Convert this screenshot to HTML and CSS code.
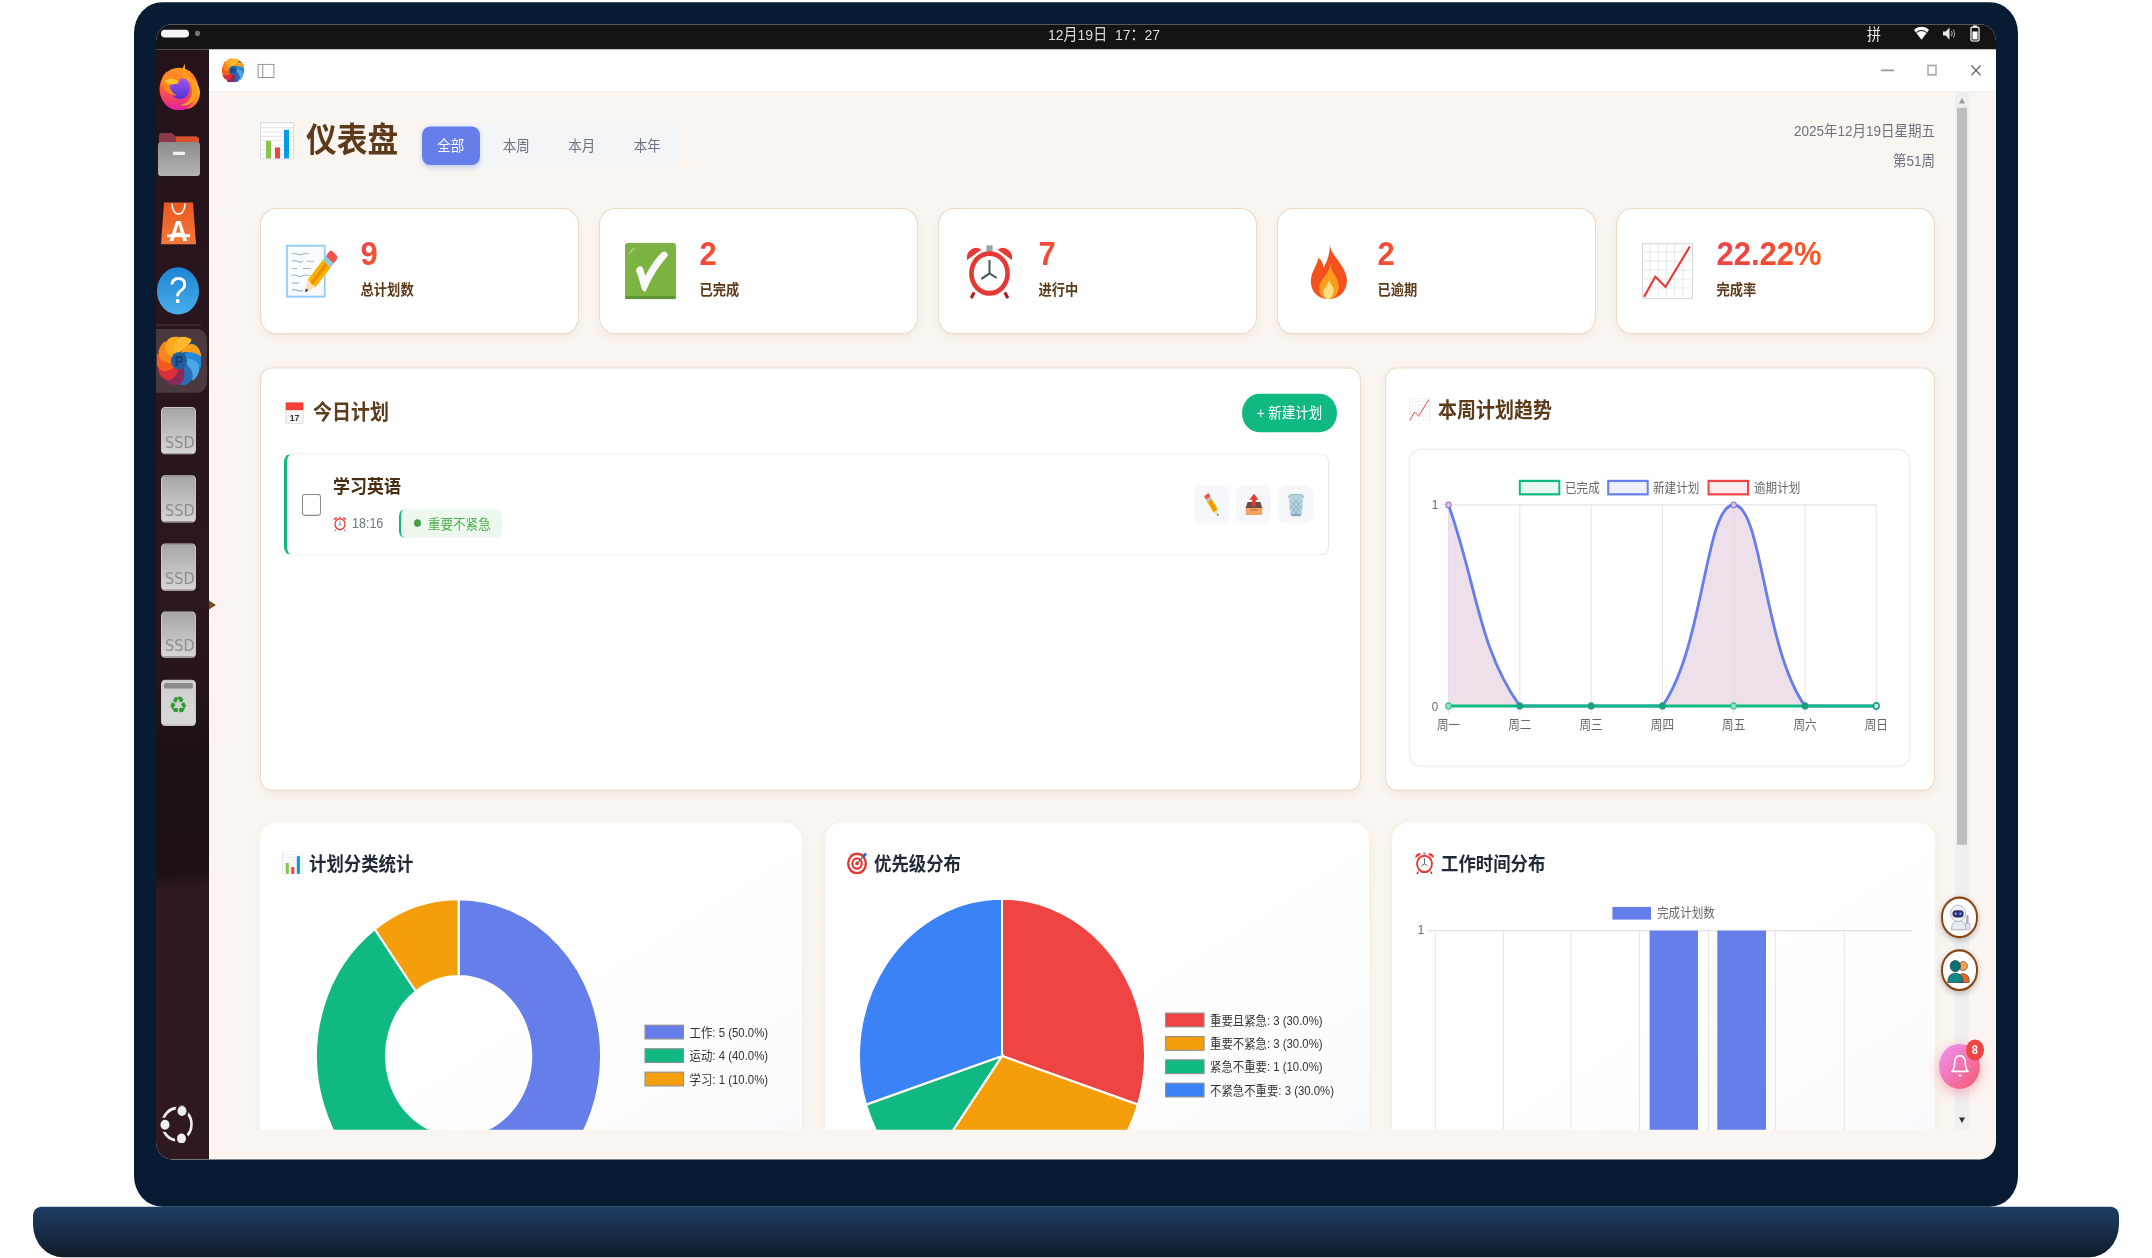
FILE: index.html
```html
<!DOCTYPE html>
<html lang="zh-CN">
<head>
<meta charset="utf-8">
<title>仪表盘</title>
<link rel="stylesheet" href="styles.css">
</head>
<body>
<svg class="sprite" aria-hidden="true">
  <defs>
    <linearGradient id="g-fox" x1="0" y1="0" x2="0" y2="1"><stop offset="0" stop-color="#ff9a24"/><stop offset=".5" stop-color="#ff5a3a"/><stop offset="1" stop-color="#e01fa0"/></linearGradient>
    <linearGradient id="g-flame" x1="0" y1="0" x2="0" y2="1"><stop offset="0" stop-color="#ffe14a"/><stop offset=".6" stop-color="#ffb01f"/><stop offset="1" stop-color="#ff6a2a"/></linearGradient>
    <linearGradient id="g-globe" x1="0" y1="0" x2="0" y2="1"><stop offset="0" stop-color="#a45ae6"/><stop offset="1" stop-color="#5330d8"/></linearGradient>
    <linearGradient id="g-folder" x1="0" y1="0" x2="0" y2="1"><stop offset="0" stop-color="#8c8c8c"/><stop offset="1" stop-color="#b4b4b4"/></linearGradient>
    <linearGradient id="g-bag" x1="0" y1="0" x2="0" y2="1"><stop offset="0" stop-color="#e9571f"/><stop offset="1" stop-color="#f47a3a"/></linearGradient>
    <path id="blade" d="M0 -7C5 -21 16 -21 21.500 -8C16 -5 7 -5 0 -7Z"/>
  </defs>
  <symbol id="i-firefox" viewBox="0 0 42 42">
    <circle cx="21" cy="23" r="19.500" fill="url(#g-fox)"/>
    <path d="M27 0c-1 6 1 9 5 12 6 4 10 9 10 14 0 8-6 15-14 15 6-3 9-8 9-14 0-6-4-10-9-14-4-3-3-8-1-13z" fill="url(#g-flame)"/>
    <path d="M27 0c-3 4-4 8-3 12 5 1 9 5 10 10 1 8-4 14-12 16 9 1 16-4 17-12 1-6-3-10-7-14-3-3-6-6-5-12z" fill="#ff9d1f"/>
    <circle cx="22" cy="22" r="10" fill="url(#g-globe)"/>
    <path d="M9 7l2 5c3-2 5-3 8-3 4 0 7 2 9 5-3-1-5-1-7 0 1 2 0 3-2 4l-8 1c1 5 4 8 8 10-6 0-13-4-15-11C3 14 5 10 9 7z" fill="#ff8a1f"/>
    <path d="M7 15c3-2 8-2 12 0l1 3-8 1c-2 0-4-2-5-4z" fill="#ffc233"/>
  </symbol>
  <symbol id="i-files" viewBox="0 0 42 39">
    <path d="M1 3a3 3 0 0 1 3-3h10l4 3h20a3 3 0 0 1 3 3v8H1z" fill="#8f3a4c"/>
    <path d="M18 3h20a3 3 0 0 1 3 3v6H18z" fill="#d9542a"/>
    <rect x="0" y="8" width="42" height="31" rx="3" fill="url(#g-folder)"/>
    <rect x="15" y="17" width="12" height="3" rx="1" fill="#f2f2f2"/>
  </symbol>
  <symbol id="i-app" viewBox="-22 -22 44 44">
    <use href="#blade" fill="#1a4f8f"/>
    <use href="#blade" fill="#2a88d8" transform="rotate(36)"/>
    <use href="#blade" fill="#4aa8e8" transform="rotate(72)"/>
    <use href="#blade" fill="#2a6cb8" transform="rotate(108)"/>
    <use href="#blade" fill="#8a2a5a" transform="rotate(144)"/>
    <use href="#blade" fill="#d8303a" transform="rotate(180)"/>
    <use href="#blade" fill="#f25a1f" transform="rotate(216)"/>
    <use href="#blade" fill="#f7861e" transform="rotate(252)"/>
    <use href="#blade" fill="#ffa71f" transform="rotate(288)"/>
    <use href="#blade" fill="#ffb92e" transform="rotate(324)"/>
    <path d="M0 -7C5 -21 16 -21 21.500 -8C16 -11 7 -11 0 -7Z" fill="#f7a01e" transform="rotate(12)"/>
    <circle r="8" fill="#1f5f9e"/>
  </symbol>
  <symbol id="i-bars" viewBox="0 0 34 34">
    <rect x=".5" y=".5" width="33" height="33" fill="#fff" stroke="#d5dde2"/>
    <path d="M1 5h32M1 9h32M1 13h32M1 17h32M1 21h32M1 25h32M1 29h32" stroke="#e3e8ec"/>
    <rect x="6" y="17" width="5" height="16" fill="#8bc34a"/>
    <rect x="15" y="23" width="5" height="10" fill="#f44336"/>
    <rect x="24" y="7" width="5" height="26" fill="#039be5"/>
  </symbol>
  <symbol id="i-memo" viewBox="0 0 54 51">
    <rect x="1" y="1" width="40" height="49" fill="#f8fcff" stroke="#90caf9" stroke-width="1.800"/>
    <path d="M6 9q3-1.500 6 0t6 0 6 0M6 16q3-1.500 6 0t6 0M22 16h8M6 23h6M18 23h8M6 30q3-1.500 6 0t6 0 8 0M6 37h8M6 44q3-1.500 6 0t6 0" fill="none" stroke="#a8b6bf" stroke-width="1.100"/>
    <g transform="translate(20 46) rotate(40)">
      <path d="M0 0l-5.500-11h11z" fill="#ffe0b2"/>
      <path d="M0 0l-1.700-3.800h3.400z" fill="#424242"/>
      <rect x="-5.500" y="-36" width="11" height="25" fill="#ffb300"/>
      <rect x="-1.800" y="-36" width="3.600" height="25" fill="#ef8f00"/>
      <rect x="-5.500" y="-42" width="11" height="6" fill="#8fcdd9"/>
      <rect x="-5.500" y="-49" width="11" height="8" rx="2" fill="#ef5350"/>
    </g>
  </symbol>
  <symbol id="i-check" viewBox="0 0 51 51">
    <rect width="51" height="51" rx="3" fill="#7cb342"/>
    <rect y="48" width="51" height="3" rx="1.500" fill="#5f9433"/>
    <path d="M12 25c3 5 4 12 6 17l2 1C25 32 33 20 42 11c-1-2-2-3-4-2-8 6-13 15-18 23-1-3-2-6-3-9-2-2-4-1-5 2z" fill="#fafafa" stroke="#fafafa" stroke-width="2" stroke-linejoin="round"/>
    <path d="M4 11c0-4 3-7 8-7-4 2-6 4-8 7z" fill="#a5cf78"/>
  </symbol>
  <symbol id="i-alarm" viewBox="0 0 50 50">
    <path d="M3 15a9 9 0 0 1 14-9zM47 15a9 9 0 0 0-14-9z" fill="#e53935"/>
    <path d="M10 44l-3 5M40 44l3 5" stroke="#b71c1c" stroke-width="3"/>
    <circle cx="25" cy="27" r="20" fill="#e53935"/>
    <circle cx="25" cy="27" r="15.500" fill="#fff"/>
    <path d="M25 15v12l-8 5M25 27l7 4" fill="none" stroke="#455a64" stroke-width="2"/>
    <rect x="22" y="2" width="6" height="5" fill="#90a4ae"/>
  </symbol>
  <symbol id="i-fire" viewBox="0 0 50 50">
    <path d="M26 0c1 12 15 18 17 32 1 11-8 18-18 18C14 50 6 42 8 31c1-7 6-11 7-18 4 3 5 6 5 9 4-6 7-14 6-22z" fill="#f4511e"/>
    <path d="M27 18c0 9 9 13 8 22-1 6-5 10-10 10-6 0-10-5-9-11 1-7 10-11 11-21z" fill="#ff9d1a"/>
    <path d="M26 32c0 5 5 7 4 11-1 4-3 7-5 7-3 0-5-3-5-6 0-4 5-7 6-12z" fill="#ffe082"/>
  </symbol>
  <symbol id="i-trend" viewBox="0 0 50 50">
    <rect x=".5" y=".5" width="49" height="49" fill="#fff" stroke="#cfd8dc"/>
    <path d="M8 0v50M16 0v50M24 0v50M32 0v50M40 0v50M0 8h50M0 16h50M0 24h50M0 32h50M0 40h50" stroke="#dfe5e9" stroke-width=".8"/>
    <path d="M2 48l11-18 10 9L47 3" fill="none" stroke="#e53935" stroke-width="2"/>
  </symbol>
  <symbol id="i-target" viewBox="0 0 22 22">
    <circle cx="10.500" cy="11.500" r="10.500" fill="#e53935"/>
    <circle cx="10.500" cy="11.500" r="8" fill="#fff"/>
    <circle cx="10.500" cy="11.500" r="6" fill="#e53935"/>
    <circle cx="10.500" cy="11.500" r="3.800" fill="#fff"/>
    <circle cx="10.500" cy="11.500" r="1.800" fill="#e53935"/>
    <path d="M10.500 11.500L18 4" stroke="#455a64" stroke-width="1"/>
    <path d="M16 4l3-3 2 2-3 3z" fill="#1976d2"/>
  </symbol>
  <symbol id="i-pencil" viewBox="0 0 24 24">
    <g transform="translate(19 23) rotate(-32)">
      <path d="M0 0l-3-6h6z" fill="#ffe0b2"/>
      <path d="M0 0l-1-2h2z" fill="#424242"/>
      <rect x="-3" y="-18" width="6" height="12" fill="#ffb300"/>
      <rect x="-1" y="-18" width="2" height="12" fill="#ef8f00"/>
      <rect x="-3" y="-21" width="6" height="3" fill="#b0bec5"/>
      <rect x="-3" y="-25" width="6" height="4" rx="1" fill="#ef5350"/>
    </g>
  </symbol>
  <symbol id="i-outbox" viewBox="0 0 24 24">
    <path d="M3 13h18v9H3z" fill="#f4a460"/>
    <path d="M5 9h14l2 6H3z" fill="#6d4c41"/>
    <path d="M12 1l5 6h-3v6h-4V7H7z" fill="#e53935"/>
    <path d="M8 17h8" stroke="#c97a3a" stroke-width="1.500"/>
  </symbol>
  <symbol id="i-bin" viewBox="0 0 24 24">
    <ellipse cx="12" cy="4" rx="8" ry="2.500" fill="#b8d4e0" stroke="#8fb4c4"/>
    <path d="M4 4l2 18h12l2-18z" fill="#b8d4e0"/>
    <path d="M6 8l12 12M9 6l10 10M5 12l9 9M18 8L7 20M15 6L5 16M19 12l-9 9M8 22h8" stroke="#82a8ba" stroke-width=".7"/>
    <ellipse cx="12" cy="22" rx="6" ry="1.300" fill="#82a8ba"/>
  </symbol>
</svg>

<div class="stage">
  <div class="laptop">
    <div class="screen">
      <div class="topbar">
        <div class="tb-left"><span class="tb-pill"></span><span class="tb-dot"></span></div>
        <div class="tb-clock">12月19日&nbsp;&nbsp;17：27</div>
        <div class="tb-right">
          <span class="tb-ime">拼</span>
          <svg class="tb-ico" viewBox="0 0 16 14"><path d="M0 3.500a11.500 11.500 0 0 1 16 0L8 13z" fill="#fff"/><path d="M2.600 6a8 8 0 0 1 10.800 0" fill="none" stroke="#141414" stroke-width="1"/></svg>
          <svg class="tb-ico" viewBox="0 0 16 14"><path d="M1 5h3l4-4v12l-4-4H1z" fill="#e8e8e8"/><path d="M10 4.500a4 4 0 0 1 0 5M12 3a6.500 6.500 0 0 1 0 8" fill="none" stroke="#aaa" stroke-width="1"/></svg>
          <svg class="tb-batt" viewBox="0 0 10 16"><path d="M3 0h4v2H3z" fill="#fff"/><rect x=".7" y="1.700" width="8.600" height="13.600" rx="1.500" fill="none" stroke="#fff" stroke-width="1.300"/><rect x="2.300" y="6" width="5.400" height="7.700" fill="#fff"/></svg>
        </div>
      </div>
      <div class="desktop">
        <nav class="dock">
          <div class="dock-slot"><svg class="ico-firefox"><use href="#i-firefox"/></svg></div>
          <div class="dock-slot"><svg class="ico-files"><use href="#i-files"/></svg></div>
          <div class="dock-slot">
            <svg class="ico-store" viewBox="0 0 35 46">
              <path d="M3 1h29l3 38H0z" fill="url(#g-bag)"/>
              <path d="M11 2c0 13 13 13 13 0" fill="none" stroke="#fff" stroke-width="1.600"/>
              <text class="svg-store-a" x="17.500" y="36" text-anchor="middle">A</text>
              <rect x="6" y="30" width="23" height="2.600" fill="#fff"/>
            </svg>
          </div>
          <div class="dock-slot"><div class="ico-help">?</div></div>
          <div class="dock-sep"></div>
          <div class="dock-slot dock-active">
            <svg class="ico-app-big" viewBox="0 0 44 44"><use href="#i-app" width="44" height="44"/><text class="svg-app-p" x="22" y="26.500" text-anchor="middle">P</text></svg>
          </div>
          <div class="dock-slot"><div class="ico-disk"><span>SSD</span></div></div>
          <div class="dock-slot"><div class="ico-disk"><span>SSD</span></div></div>
          <div class="dock-slot"><div class="ico-disk"><span>SSD</span></div></div>
          <div class="dock-slot"><div class="ico-disk"><span>SSD</span></div></div>
          <div class="dock-slot"><div class="ico-trash"><i></i><b>♻</b></div></div>
          <svg class="ico-ubuntu" viewBox="0 0 34 34">
            <circle cx="17" cy="17" r="14.500" fill="none" stroke="#eee" stroke-width="2.600"/>
            <g fill="#eee" stroke="#2d191e" stroke-width="2.200"><circle cx="22" cy="5" r="5.600"/><circle cx="5" cy="17.500" r="5.600"/><circle cx="21.500" cy="30" r="5.600"/></g>
          </svg>
        </nav>
        <div class="window">
          <header class="titlebar">
            <svg class="ico-app-small" viewBox="0 0 44 44"><use href="#i-app" width="44" height="44"/><text class="svg-app-p" x="22" y="26.500" text-anchor="middle">P</text></svg>
            <svg class="ico-side" viewBox="0 0 18 14"><rect x=".5" y=".5" width="17" height="13" fill="none" stroke="#8a8a8a"/><path d="M5.500 0v14" stroke="#8a8a8a"/></svg>
            <div class="win-btns">
              <svg class="win-btn" viewBox="0 0 14 14"><path d="M0 7h13" stroke="#9a9a9a" stroke-width="1.500"/></svg>
              <svg class="win-btn" viewBox="0 0 14 14"><rect x="3" y="2.500" width="8" height="8.500" fill="none" stroke="#a8a8a8" stroke-width="1.500"/></svg>
              <svg class="win-btn" viewBox="0 0 14 14"><path d="M2.500 2.500l9 9M11.500 2.500l-9 9" stroke="#666" stroke-width="1.300"/></svg>
            </div>
          </header>
          <div class="work">
            <main class="view">
              <section class="page-head">
                <div class="head-left">
                  <svg class="head-ico"><use href="#i-bars"/></svg>
                  <h1 class="head-title">仪表盘</h1>
                  <div class="tabs">
                    <span class="tab tab-on">全部</span>
                    <span class="tab">本周</span>
                    <span class="tab">本月</span>
                    <span class="tab">本年</span>
                  </div>
                </div>
                <div class="head-date">
                  <div>2025年12月19日星期五</div>
                  <div>第51周</div>
                </div>
              </section>

              <section class="stats">
                <article class="stat"><svg class="stat-ico"><use href="#i-memo"/></svg><div class="stat-body"><div class="stat-num"><span>9</span></div><div class="stat-label">总计划数</div></div></article>
                <article class="stat"><svg class="stat-ico"><use href="#i-check"/></svg><div class="stat-body"><div class="stat-num"><span>2</span></div><div class="stat-label">已完成</div></div></article>
                <article class="stat"><svg class="stat-ico"><use href="#i-alarm"/></svg><div class="stat-body"><div class="stat-num"><span>7</span></div><div class="stat-label">进行中</div></div></article>
                <article class="stat"><svg class="stat-ico"><use href="#i-fire"/></svg><div class="stat-body"><div class="stat-num"><span>2</span></div><div class="stat-label">已逾期</div></div></article>
                <article class="stat"><svg class="stat-ico"><use href="#i-trend"/></svg><div class="stat-body"><div class="stat-num"><span>22.22%</span></div><div class="stat-label">完成率</div></div></article>
              </section>

              <section class="mid">
                <article class="panel panel-today">
                  <div class="panel-head">
                    <h2 class="panel-title">
                      <svg class="title-ico" viewBox="0 0 22 24">
                        <rect x="1" y="1" width="20" height="22" rx="1" fill="#f5f5f5" stroke="#d0d0d0" stroke-width=".6"/>
                        <rect x="1" y="1" width="20" height="8" fill="#f44336"/>
                        <text class="svg-cal" x="11" y="20" text-anchor="middle">17</text>
                      </svg>今日计划</h2>
                    <button class="btn-new">+ 新建计划</button>
                  </div>
                  <div class="plan-list">
                    <div class="plan">
                      <input class="plan-check" type="checkbox">
                      <div class="plan-body">
                        <div class="plan-name">学习英语</div>
                        <div class="plan-meta">
                          <svg class="meta-ico"><use href="#i-alarm"/></svg>
                          <span class="plan-time">18:16</span>
                          <span class="plan-tag"><i class="tag-dot"></i>重要不紧急</span>
                        </div>
                      </div>
                      <div class="plan-actions">
                        <span class="act"><svg class="act-ico"><use href="#i-pencil"/></svg></span>
                        <span class="act"><svg class="act-ico"><use href="#i-outbox"/></svg></span>
                        <span class="act"><svg class="act-ico"><use href="#i-bin"/></svg></span>
                      </div>
                    </div>
                  </div>
                </article>
                <article class="panel panel-trend">
                  <h2 class="panel-title panel-title-trend"><svg class="title-ico"><use href="#i-trend"/></svg>本周计划趋势</h2>
                  <div class="chart-box">
                    <svg class="trend-chart" viewBox="0 0 501 289">
                      <g class="grid-lines">
                        <path d="M33 51H467.300M39.500 51V241M110.800 51V241M182.100 51V241M253.400 51V241M324.700 51V241M396 51V241M467.300 51V241"/>
                      </g>
                      <path d="M39.500 51C68 124.100 69 180.200 110.800 233.800L39.500 233.800ZM253.400 233.800C295.200 180.200 296.200 51 324.700 51C353.200 51 354.200 180.200 396 233.800Z" fill="#e6d4e2" fill-opacity=".72"/>
                      <path d="M39.500 51C68 124.100 69 180.200 110.800 233.800L253.400 233.800C295.200 180.200 296.200 51 324.700 51C353.200 51 354.200 180.200 396 233.800L467.300 233.800" fill="none" stroke="#667eea" stroke-width="2.800"/>
                      <path d="M39.500 233.800H467.300" stroke="#10b981" stroke-width="2.800"/>
                      <circle cx="39.500" cy="51" r="2.600" class="pt-top"/><circle cx="324.700" cy="51" r="2.600" class="pt-top"/>
                      <circle cx="39.500" cy="233.800" r="2.800" class="pt-light"/><circle cx="324.700" cy="233.800" r="2.800" class="pt-light"/>
                      <circle cx="110.800" cy="233.800" r="2.800" class="pt-dark"/><circle cx="182.100" cy="233.800" r="2.800" class="pt-dark"/><circle cx="253.400" cy="233.800" r="2.800" class="pt-dark"/><circle cx="396" cy="233.800" r="2.800" class="pt-dark"/><circle cx="467.300" cy="233.800" r="2.800" class="pt-ring"/>
                      <rect x="110.800" y="29.200" width="39.500" height="12.200" fill="#e7f8f2" stroke="#10b981" stroke-width="2"/>
                      <rect x="199.200" y="29.200" width="39.500" height="12.200" fill="#eef1fd" stroke="#667eea" stroke-width="2"/>
                      <rect x="299.500" y="29.200" width="39.500" height="12.200" fill="#feecec" stroke="#ef4444" stroke-width="2"/>
                      <text class="chart-text" x="156" y="39">已完成</text>
                      <text class="chart-text" x="244" y="39">新建计划</text>
                      <text class="chart-text" x="345" y="39">逾期计划</text>
                      <text class="chart-text" x="26" y="55" text-anchor="middle">1</text>
                      <text class="chart-text" x="26" y="238" text-anchor="middle">0</text>
                      <g class="x-labels" text-anchor="middle">
                        <text class="chart-text" x="39.500" y="255">周一</text><text class="chart-text" x="110.800" y="255">周二</text><text class="chart-text" x="182.100" y="255">周三</text><text class="chart-text" x="253.400" y="255">周四</text><text class="chart-text" x="324.700" y="255">周五</text><text class="chart-text" x="396" y="255">周六</text><text class="chart-text" x="467.300" y="255">周日</text>
                      </g>
                    </svg>
                  </div>
                </article>
              </section>

              <section class="lower">
                <article class="tile">
                  <h3 class="tile-title"><svg class="tile-ico"><use href="#i-bars"/></svg>计划分类统计</h3>
                  <svg class="tile-chart" viewBox="0 10 543 300">
                    <g class="slices">
                      <path d="M198.600 27.500A142.500 142.500 0 0 1 198.600 312.500L198.600 242.700A72.700 72.700 0 0 0 198.600 97.300Z" fill="#667eea"/>
                      <path d="M198.600 312.500A142.500 142.500 0 0 1 114.800 54.700L155.900 111.200A72.700 72.700 0 0 0 198.600 242.700Z" fill="#10b981"/>
                      <path d="M114.800 54.700A142.500 142.500 0 0 1 198.600 27.500L198.600 97.300A72.700 72.700 0 0 0 155.900 111.200Z" fill="#f59e0b"/>
                    </g>
                    <rect class="lg-box" x="385" y="142" width="38.500" height="12.500" fill="#667eea"/><text class="lg-text" x="429.600" y="152.500">工作: 5 (50.0%)</text>
                    <rect class="lg-box" x="385" y="163.400" width="38.500" height="12.500" fill="#10b981"/><text class="lg-text" x="429.600" y="173.900">运动: 4 (40.0%)</text>
                    <rect class="lg-box" x="385" y="184.700" width="38.500" height="12.500" fill="#f59e0b"/><text class="lg-text" x="429.600" y="195.200">学习: 1 (10.0%)</text>
                  </svg>
                </article>
                <article class="tile">
                  <h3 class="tile-title"><svg class="tile-ico"><use href="#i-target"/></svg>优先级分布</h3>
                  <svg class="tile-chart" viewBox="0 10 543 300">
                    <g class="slices">
                      <path d="M177 170L177 27A143 143 0 0 1 313 214.200Z" fill="#ef4444"/>
                      <path d="M177 170L313 214.200A143 143 0 0 1 93 285.700Z" fill="#f59e0b"/>
                      <path d="M177 170L93 285.700A143 143 0 0 1 41 214.200Z" fill="#10b981"/>
                      <path d="M177 170L41 214.200A143 143 0 0 1 177 27Z" fill="#3b82f6"/>
                    </g>
                    <rect class="lg-box" x="340.600" y="131" width="38.500" height="12.500" fill="#ef4444"/><text class="lg-text" x="385" y="141.500">重要且紧急: 3 (30.0%)</text>
                    <rect class="lg-box" x="340.600" y="152.300" width="38.500" height="12.500" fill="#f59e0b"/><text class="lg-text" x="385" y="162.800">重要不紧急: 3 (30.0%)</text>
                    <rect class="lg-box" x="340.600" y="173.500" width="38.500" height="12.500" fill="#10b981"/><text class="lg-text" x="385" y="184">紧急不重要: 1 (10.0%)</text>
                    <rect class="lg-box" x="340.600" y="194.700" width="38.500" height="12.500" fill="#3b82f6"/><text class="lg-text" x="385" y="205.200">不紧急不重要: 3 (30.0%)</text>
                  </svg>
                </article>
                <article class="tile">
                  <h3 class="tile-title"><svg class="tile-ico"><use href="#i-alarm"/></svg>工作时间分布</h3>
                  <svg class="tile-chart" viewBox="0 10 543 300">
                    <g class="grid-lines"><path d="M35.500 56H520.500M43.300 56V310M111.500 56V310M179 56V310M247.400 56V310M316.400 56V310M383.300 56V310M452.300 56V310"/></g>
                    <rect x="257.600" y="56" width="48.400" height="254" fill="#667eea"/>
                    <rect x="325.300" y="56" width="48.700" height="254" fill="#667eea"/>
                    <rect x="220.400" y="34.500" width="38.600" height="11.500" fill="#667eea"/>
                    <text class="chart-text" x="265" y="44">完成计划数</text>
                    <text class="chart-text" x="29" y="59.500" text-anchor="middle">1</text>
                  </svg>
                </article>
              </section>
            </main>
            <aside class="scrollbar">
              <span class="sb-up"></span>
              <span class="sb-thumb"></span>
              <span class="sb-down"></span>
            </aside>
          </div>
          <span class="edge-arrow"></span>
          <button class="fab fab-robot" aria-label="AI">
            <svg viewBox="0 0 30 30" class="fab-svg">
              <path d="M7 27c0-6 3-9 8-9s7 3 8 9z" fill="#e8eaf2" stroke="#9aa0b8" stroke-width=".8"/>
              <circle cx="14" cy="11" r="8" fill="#eef0f6" stroke="#a5aac0" stroke-width=".8"/>
              <rect x="8" y="8" width="12" height="7" rx="3.500" fill="#2b2f6e"/>
              <circle cx="11.500" cy="11.500" r="1.200" fill="#8fa0ff"/><circle cx="16.500" cy="11.500" r="1.200" fill="#8fa0ff"/>
              <path d="M24 14v7" stroke="#a5aac0" stroke-width="2.500" stroke-linecap="round"/>
              <path d="M22 27v-6h5v6z" fill="#dfe2ec" stroke="#a5aac0" stroke-width=".6"/>
            </svg>
          </button>
          <button class="fab fab-team" aria-label="团队">
            <svg viewBox="0 0 30 30" class="fab-svg">
              <path d="M15 27v-7c2-2 5-2 7-1 3 1 4 3 4 8z" fill="#e8622c" stroke="#333" stroke-width=".6"/>
              <circle cx="19.500" cy="11" r="4.500" fill="#f0a050" stroke="#333" stroke-width=".6"/>
              <path d="M3 27c0-6 3-9 8-9s8 3 8 9z" fill="#0f8a8a" stroke="#123" stroke-width=".6"/>
              <circle cx="11" cy="11" r="5.500" fill="#0c6f70" stroke="#123" stroke-width=".6"/>
            </svg>
          </button>
          <button class="bell" aria-label="通知">
            <svg viewBox="0 0 24 26" class="bell-svg"><path d="M12 2c-4 0-6 3-6 7 0 5-1 7-3 9h18c-2-2-3-4-3-9 0-4-2-7-6-7z" fill="none" stroke="#fff" stroke-width="1.800" stroke-linejoin="round"/><path d="M10.500 22l1.500 1.500L13.500 22z" fill="#fff" stroke="#fff"/></svg>
            <span class="bell-badge">8</span>
          </button>
        </div>
      </div>
    </div>
  </div>
  <div class="laptop-base"></div>
</div>
</body>
</html>
```

FILE: styles.css
```css
* { box-sizing: border-box; }
html, body { margin: 0; padding: 0; background: #fff; overflow: hidden; }
body { width: 2152px; height: 1258px; font-family: "Liberation Sans", "Noto Sans CJK SC", sans-serif; }
h1, h2, h3 { margin: 0; }
button { border: 0; padding: 0; font-family: inherit; }
.sprite { position: absolute; width: 0; height: 0; }

/* the reference is stretched vertically by about 10% */
.stage { width: 2152px; height: 1144px; display: flex; flex-direction: column; align-items: center; padding-top: 1.800px; transform: scaleY(1.1); transform-origin: 0 0; filter: blur(.35px); }
.laptop { width: 1884px; height: 1095.200px; background: #071c33; border-radius: 28px; padding: 20px 22px 43px; flex: none; }
.laptop-base { width: 2086px; height: 46.500px; flex: none; border-radius: 8px 8px 30px 30px; background: linear-gradient(#1e3f66, #101b27); }
.screen { height: 100%; border-radius: 16px; overflow: hidden; display: flex; flex-direction: column; background: #faf5f0; }

.topbar { height: 23.700px; flex: none; background: #141414; display: flex; align-items: center; position: relative; padding: 0 16px 6px 4.600px; color: #ddd; }
.tb-left { display: flex; align-items: center; gap: 6px; }
.tb-pill { width: 28px; height: 7.500px; background: #f4f4f4; border-radius: 4px; }
.tb-dot { width: 5.500px; height: 5.500px; background: #777; border-radius: 50%; }
.tb-clock { position: absolute; left: 892px; top: -1px; font-size: 14px; line-height: 20px; }
.tb-right { margin-left: auto; display: flex; align-items: center; }
.tb-ime { font-size: 14px; color: #f0f0f0; margin-right: 33px; line-height: 18px; }
.tb-ico { width: 15px; height: 13px; margin-right: 13px; }
.tb-batt { width: 10px; height: 15px; }

.desktop { flex: 1; display: flex; min-height: 0; }
.dock { width: 53px; flex: none; display: flex; flex-direction: column; padding: 2.700px 0 15px; background: linear-gradient(176deg, #25131b 0, #2b171f 50%, #241419 58%, #1a0f13 64%, #1c1014 74%, #2d191e 75.500%, #2d191e 100%); }
.dock-slot { height: 61.800px; flex: none; display: flex; align-items: center; padding-left: 4.700px; }
.dock-sep { height: 3.700px; flex: none; position: relative; border-top: 1px solid #4b3a40; width: 45px; margin-left: 0; }
.dock-active { width: 51px; padding-left: 0; justify-content: center; background: #4a393f; border-radius: 0 10px 10px 0; height: 58px; margin-bottom: 3.800px; }
.ico-firefox { width: 42px; height: 42px; margin-left: -3px; }
.ico-files { width: 42px; height: 39px; margin-left: -3px; }
.ico-store { width: 35px; height: 46px; margin-top: 6px; }
.ico-help { width: 42px; height: 42.700px; margin-left: -3.500px; border-radius: 50%; background: linear-gradient(#1c84d4, #4aaeea); color: #fff; font: 33px/42px "Liberation Sans", sans-serif; text-align: center; }
.ico-app-big { width: 44px; height: 44px; margin-left: -6px; }
.ico-disk, .ico-trash { width: 35px; height: 42.700px; border-radius: 4px; border: 1px solid #c8c8c8; background: linear-gradient(#a6a6a6, #d6d6d6); position: relative; }
.ico-disk span { position: absolute; right: 0; bottom: 1px; font: 14.500px/17px "DejaVu Sans", sans-serif; color: #8d8d8d; }
.ico-trash { background: linear-gradient(#cfcfcf, #d8d8d8); text-align: center; }
.ico-trash i { display: block; margin: 2.500px 2px 0; height: 5px; background: #8a8a8a; border-radius: 2px; }
.ico-trash b { display: block; font: 700 21px/30px "DejaVu Sans", sans-serif; color: #2f9a2f; }
.ico-ubuntu { width: 34px; height: 34px; margin: auto 0 0 4px; flex: none; }
.svg-store-a { font: 700 26px "Liberation Sans", sans-serif; fill: #fff; }
.svg-app-p { font: 700 13px "Liberation Sans", sans-serif; fill: #123f75; }
.svg-cal { font: 700 10px "Liberation Sans", sans-serif; fill: #333; }

.window { flex: 1; min-width: 0; position: relative; display: flex; flex-direction: column; }
.titlebar { height: 38.300px; flex: none; background: #fff; border-bottom: 1px solid #ececec; display: flex; align-items: center; padding: 0 13px 0 13px; }
.ico-app-small { width: 22px; height: 22px; }
.ico-side { width: 18px; height: 13px; margin-left: 13px; }
.win-btns { margin-left: auto; display: flex; gap: 30px; }
.win-btn { width: 14px; height: 14px; }

.work { display: flex; height: 943.400px; flex: none; }
.view { flex: 1; min-width: 0; height: 100%; overflow: hidden; padding: 22.400px 20px 0 51px; background: #faf5f0; }
.scrollbar { width: 14px; flex: none; margin-right: 27px; background: #eeeff0; display: flex; flex-direction: column; align-items: center; height: 100%; }
.sb-up { width: 0; height: 0; margin: 5px 0 4px; border: 3.500px solid transparent; border-top: 0; border-bottom: 5px solid #9a9a9a; }
.sb-thumb { width: 10px; height: 670px; background: #bdbdbd; flex: none; }
.sb-down { width: 0; height: 0; margin-top: auto; margin-bottom: 6px; border: 3.500px solid transparent; border-bottom: 0; border-top: 5px solid #333; }

.page-head { height: 83px; display: flex; justify-content: space-between; align-items: flex-start; }
.head-left { display: flex; align-items: flex-start; margin-top: 5px; }
.head-ico { width: 34px; height: 34px; }
.head-title { font-size: 30.700px; line-height: 34px; font-weight: 700; color: #5d3a1a; margin: 0 23px 0 12px; }
.tabs { display: flex; gap: 8px; height: 41.800px; width: 259px; padding: 3.500px 4px 0 1px; background: #f3f4f6; border-radius: 10px; }
.tab { width: 58px; height: 35.500px; border-radius: 8px; font-size: 13.500px; line-height: 35.500px; text-align: center; color: #6b7280; }
.tab-on { background: #667eea; color: #fff; box-shadow: 0 2px 5px rgba(102, 126, 234, .3); }
.head-date { font-size: 13.500px; line-height: 26.500px; color: #6b7280; text-align: right; padding-top: 1px; }

.stats { display: grid; grid-template-columns: repeat(5, 319px); gap: 20px; }
.stat { height: 114.600px; background: #fff; border: 1px solid #ecd9c8; border-radius: 16px; box-shadow: 0 3px 8px rgba(139, 69, 19, .06); display: flex; align-items: center; padding-left: 24.500px; }
.stat-ico { width: 51px; height: 51px; flex: none; margin-right: 24px; }
.stat-body { display: flex; flex-direction: column; margin-top: -4px; }
.stat-num { font-size: 31px; line-height: 32px; font-weight: 700; }
.stat-num span { background: linear-gradient(100deg, #ef4444 20%, #f9591f); -webkit-background-clip: text; background-clip: text; color: transparent; }
.stat-label { font-size: 13.300px; line-height: 18px; margin-top: 8px; font-weight: 700; color: #5d3a1a; }

.mid { display: grid; grid-template-columns: 1101px 550px; gap: 24px; margin-top: 30px; height: 385.500px; }
.panel { background: #fff; border: 1px solid #ecd9c8; border-radius: 12px; box-shadow: 0 3px 8px rgba(139, 69, 19, .06); padding: 23px 23px 0; }
.panel-head { display: flex; justify-content: space-between; align-items: center; height: 35.400px; }
.panel-title { display: flex; align-items: center; font-size: 19px; line-height: 24px; color: #5d3a1a; font-weight: 700; }
.title-ico { width: 21px; height: 21px; margin-right: 8px; flex: none; }
.panel-title-trend { margin-top: 3px; }
.btn-new { width: 95px; height: 35.400px; border-radius: 18px; background: #10b981; color: #fff; font-size: 13.500px; line-height: 35px; }
.plan-list { margin-top: 19px; padding-right: 8px; }
.plan { height: 92.700px; border: 1px solid #e8e9ec; border-left: 3px solid #10b981; border-radius: 8px; display: flex; align-items: center; padding: 5px 15px 0 15px; }
.plan-check { appearance: none; -webkit-appearance: none; width: 19px; height: 20px; margin: -5px 12px 0 0; border: 1.500px solid #8a8a8a; border-radius: 3px; background: #fff; flex: none; }
.plan-body { flex: 1; min-width: 0; }
.plan-name { font-size: 17px; line-height: 20px; font-weight: 700; color: #4a2c12; }
.plan-meta { display: flex; align-items: center; margin-top: 10px; height: 26.400px; }
.meta-ico { width: 14px; height: 14px; margin-right: 5px; }
.plan-time { font-size: 12.500px; color: #6b7280; margin-right: 15.500px; }
.plan-tag { display: flex; align-items: center; width: 103px; height: 26.400px; border-left: 2px solid #10b981; border-radius: 6px; background: #edf7ed; color: #4caf50; font-size: 12.600px; padding-left: 13px; }
.tag-dot { width: 7px; height: 7px; border-radius: 50%; background: #43a047; margin-right: 7px; flex: none; }
.plan-actions { display: flex; gap: 7px; margin-top: -5px; }
.act { width: 35px; height: 34.500px; border-radius: 8px; background: #f5f7fb; display: flex; align-items: center; justify-content: center; }
.act-ico { width: 22px; height: 22px; }

.chart-box { margin-top: 23.400px; height: 289px; width: 501px; border: 1px solid #eeeef0; border-radius: 12px; overflow: hidden; box-shadow: 0 1px 3px rgba(0, 0, 0, .04); }
.trend-chart { display: block; width: 501px; height: 289px; margin: -1px; }
.grid-lines path { fill: none; stroke: #e4e4e6; stroke-width: 1; }
.chart-text { font-size: 11.600px; fill: #666; }
.pt-top { fill: #d9c6ea; stroke: #9b6fc4; stroke-width: 1; }
.pt-light { fill: #8fe0c2; stroke: #34c08e; stroke-width: 1; }
.pt-dark { fill: #1f9c86; stroke: #1f9c86; stroke-width: 1; }
.pt-ring { fill: #d5f2e8; stroke: #1f9c86; stroke-width: 1.500; }

.lower { display: grid; grid-template-columns: 542px 544px 543px; gap: 23px; margin-top: 29px; }
.tile { height: 420px; border-radius: 16px; background: linear-gradient(150deg, #fff 40%, #f7f8fc); box-shadow: 0 2px 10px rgba(139, 69, 19, .05); padding-top: 26px; }
.tile-title { display: flex; align-items: center; height: 21px; font-size: 17.400px; font-weight: 700; color: #1f2937; padding-left: 22px; margin-bottom: 5px; }
.tile-ico { width: 21px; height: 21px; margin-right: 6px; flex: none; }
.tile-chart { display: block; width: 543px; height: 300px; }
.slices path { stroke: #fff; stroke-width: 2; }
.lg-box { stroke: #8e8e8e; stroke-width: 1; }
.lg-text { font-size: 11.400px; fill: #333; }

.edge-arrow { position: absolute; left: 0; top: 501px; width: 0; height: 0; border: 4.500px solid transparent; border-right: 0; border-left: 7px solid #7a4a1f; }
.fab { position: absolute; right: 18px; width: 37.500px; height: 37.500px; border-radius: 50%; background: #fff; border: 2px solid #8b4513; box-shadow: 0 2px 6px rgba(0, 0, 0, .25); display: flex; align-items: center; justify-content: center; }
.fab-robot { top: 770px; }
.fab-team { top: 818px; }
.fab-svg { width: 28px; height: 28px; }
.bell { position: absolute; right: 16px; top: 903.700px; width: 41px; height: 41px; border-radius: 50%; background: linear-gradient(135deg, #f093fb, #f5576c); box-shadow: 0 3px 12px rgba(245, 87, 108, .45); display: flex; align-items: center; justify-content: center; }
.bell-svg { width: 22px; height: 23px; }
.bell-badge { position: absolute; top: -4.500px; right: -4px; width: 18.500px; height: 19px; border-radius: 50%; background: #ef4444; color: #fff; font-size: 11px; font-weight: 700; line-height: 19px; text-align: center; }
```
